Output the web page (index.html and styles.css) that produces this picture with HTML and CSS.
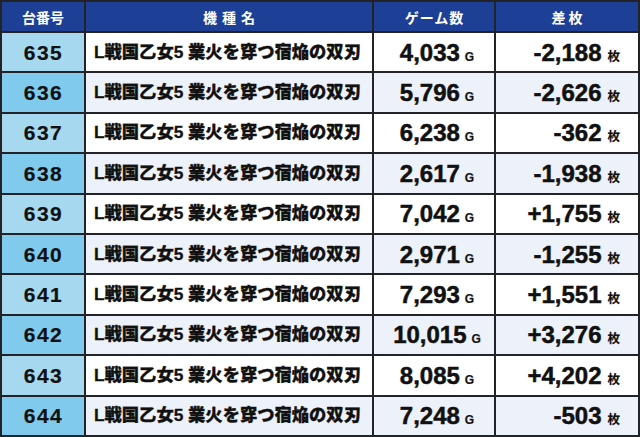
FILE: index.html
```html
<!DOCTYPE html>
<html lang="ja">
<head>
<meta charset="utf-8">
<title>台番号データ</title>
<link rel="stylesheet" href="styles.css">
</head>
<body>
<div class="table">
  <div class="th">台番号</div>
  <div class="th sp-wide">機種名</div>
  <div class="th sp-1">ゲーム数</div>
  <div class="th sp-3">差枚</div>

  <div class="c no odd">635</div><div class="c name odd">L戦国乙女5 業火を穿つ宿焔の双刃</div><div class="c game odd"><span class="v">4,033<span class="u">G</span></span></div><div class="c diff odd"><span class="v">-2,188<span class="u">枚</span></span></div>
  <div class="c no even">636</div><div class="c name even">L戦国乙女5 業火を穿つ宿焔の双刃</div><div class="c game even"><span class="v">5,796<span class="u">G</span></span></div><div class="c diff even"><span class="v">-2,626<span class="u">枚</span></span></div>
  <div class="c no odd">637</div><div class="c name odd">L戦国乙女5 業火を穿つ宿焔の双刃</div><div class="c game odd"><span class="v">6,238<span class="u">G</span></span></div><div class="c diff odd"><span class="v">-362<span class="u">枚</span></span></div>
  <div class="c no even">638</div><div class="c name even">L戦国乙女5 業火を穿つ宿焔の双刃</div><div class="c game even"><span class="v">2,617<span class="u">G</span></span></div><div class="c diff even"><span class="v">-1,938<span class="u">枚</span></span></div>
  <div class="c no odd">639</div><div class="c name odd">L戦国乙女5 業火を穿つ宿焔の双刃</div><div class="c game odd"><span class="v">7,042<span class="u">G</span></span></div><div class="c diff odd"><span class="v">+1,755<span class="u">枚</span></span></div>
  <div class="c no even">640</div><div class="c name even">L戦国乙女5 業火を穿つ宿焔の双刃</div><div class="c game even"><span class="v">2,971<span class="u">G</span></span></div><div class="c diff even"><span class="v">-1,255<span class="u">枚</span></span></div>
  <div class="c no odd">641</div><div class="c name odd">L戦国乙女5 業火を穿つ宿焔の双刃</div><div class="c game odd"><span class="v">7,293<span class="u">G</span></span></div><div class="c diff odd"><span class="v">+1,551<span class="u">枚</span></span></div>
  <div class="c no even">642</div><div class="c name even">L戦国乙女5 業火を穿つ宿焔の双刃</div><div class="c game even"><span class="v">10,015<span class="u">G</span></span></div><div class="c diff even"><span class="v">+3,276<span class="u">枚</span></span></div>
  <div class="c no odd">643</div><div class="c name odd">L戦国乙女5 業火を穿つ宿焔の双刃</div><div class="c game odd"><span class="v">8,085<span class="u">G</span></span></div><div class="c diff odd"><span class="v">+4,202<span class="u">枚</span></span></div>
  <div class="c no even">644</div><div class="c name even">L戦国乙女5 業火を穿つ宿焔の双刃</div><div class="c game even"><span class="v">7,248<span class="u">G</span></span></div><div class="c diff even"><span class="v">-503<span class="u">枚</span></span></div>
</div>
</body>
</html>
```
FILE: styles.css
```css
* { box-sizing: border-box; }
html, body { margin: 0; padding: 0; background: #ffffff; }
body { width: 640px; height: 437px; overflow: hidden; }

.table {
  display: grid;
  grid-template-columns: 82px 286px 120px 142px;
  grid-template-rows: 29px repeat(10, 1fr);
  gap: 2px;
  padding: 2px;
  width: 640px;
  height: 437px;
  background: #222326;
  font-family: "Liberation Sans", "Noto Sans CJK JP", sans-serif;
  color: #111111;
}

.th {
  background: #1d3f95;
  color: #ffffff;
  font-family: "Noto Sans CJK JP", sans-serif;
  font-weight: 700;
  font-size: 14px;
  display: flex;
  align-items: center;
  justify-content: center;
  line-height: 1;
}
.sp-wide { letter-spacing: 5px; padding-left: 5px; }
.sp-1 { letter-spacing: 1px; padding-left: 1px; }
.sp-3 { letter-spacing: 3px; padding-left: 3px; }

.c {
  display: flex;
  align-items: center;
  font-weight: 700;
  line-height: 1;
  white-space: nowrap;
}
.odd { background: #ffffff; }
.even { background: #edf1f9; }
.no.odd { background: #a6d9ef; }
.no.even { background: #80cbed; }

.no {
  justify-content: center;
  font-size: 21px;
  letter-spacing: 1.5px;
  padding-left: 1px;
  -webkit-text-stroke: 0.2px #111111;
}
.name {
  padding-left: 8px;
  font-size: 17.3px;
  font-weight: 900;
  font-family: "Liberation Sans", "Noto Sans CJK JP", sans-serif;
  -webkit-text-stroke: 0.3px #111111;
}
.game, .diff {
  font-size: 24px;
  padding-top: 1px;
  -webkit-text-stroke: 0.5px #111111;
}
.game { justify-content: center; padding-left: 6px; }
.diff { justify-content: flex-end; padding-right: 18px; }

.v { display: inline-block; }

.u {
  font-size: 12px;
  margin-left: 5px;
  font-family: "Liberation Sans", "Noto Sans CJK JP", sans-serif;
  -webkit-text-stroke: 0.2px #111111;
}
.diff .u { font-size: 12.5px; margin-left: 6px; }
```
